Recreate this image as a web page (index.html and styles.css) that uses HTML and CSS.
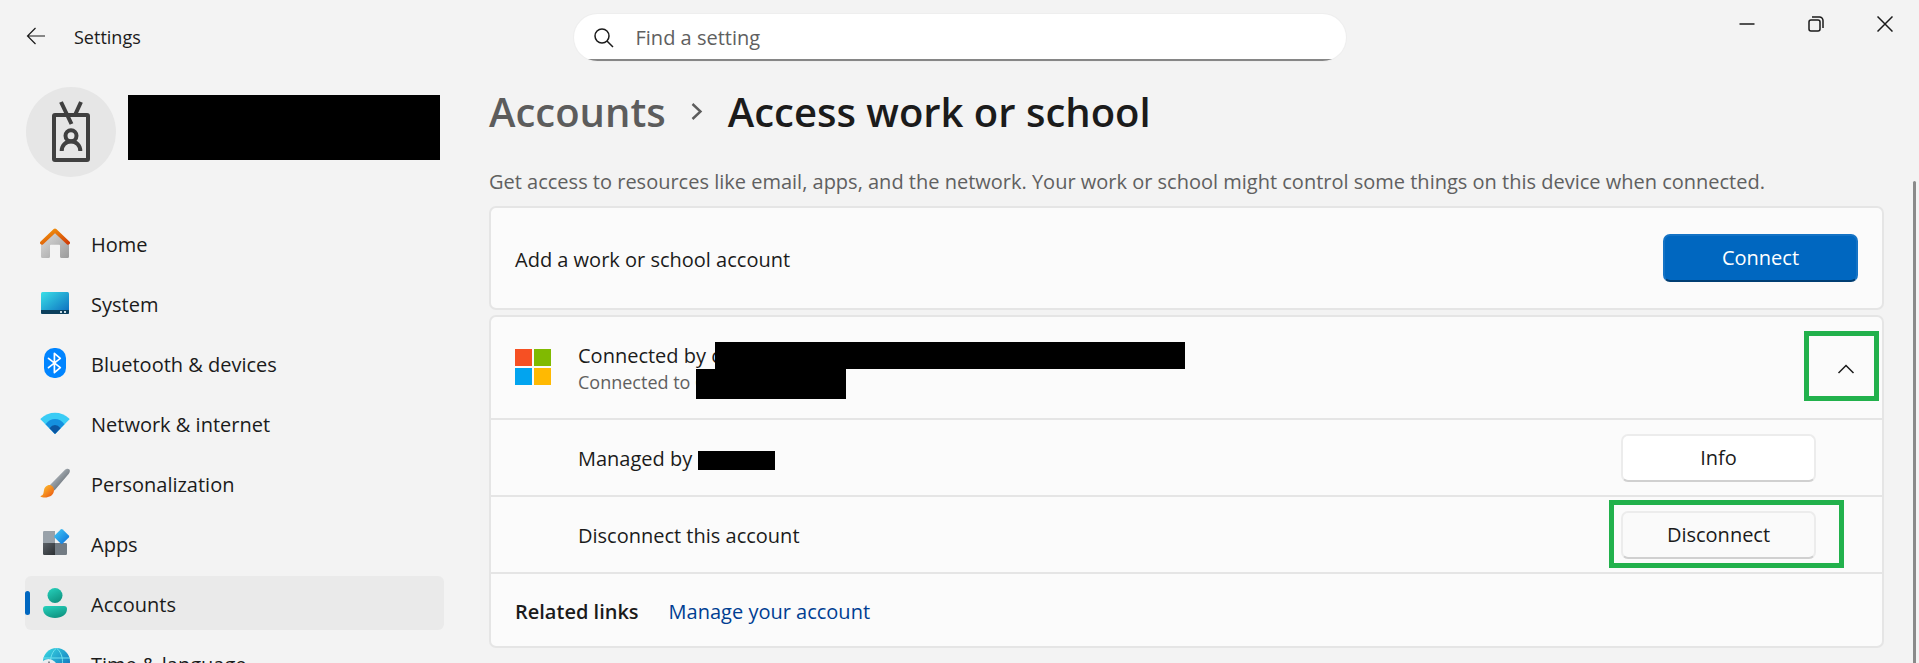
FILE: index.html
```html
<!DOCTYPE html>
<html lang="en">
<head>
    <meta charset="UTF-8">
    <meta name="viewport" content="width=device-width, initial-scale=1.0">
    <title>Settings - Access work or school</title>
    <link rel="stylesheet" href="styles.css">
</head>
<body>
    <header class="titlebar">
        <div class="titlebar-left">
            <button class="back-btn" type="button" aria-label="Back">
                <svg width="20" height="18" viewBox="0 0 20 18" fill="none" stroke="#1b1b1b" stroke-width="1.2"><path d="M19 9H1.5M9.5 1 1.5 9l8 8"/></svg>
            </button>
            <span class="app-name">Settings</span>
        </div>
        <div class="search">
            <svg width="20" height="20" viewBox="0 0 20 20" fill="none" stroke="#1b1b1b" stroke-width="1.5"><circle cx="8" cy="8" r="7"/><path d="M13 13l6 6"/></svg>
            <input type="text" placeholder="Find a setting" aria-label="Find a setting">
        </div>
        <div class="window-controls">
            <button type="button" aria-label="Minimize">
                <svg width="16" height="16" viewBox="0 0 16 16" fill="none" stroke="#1b1b1b" stroke-width="1.5"><path d="M.5 8h15"/></svg>
            </button>
            <button type="button" aria-label="Restore">
                <svg width="16" height="16" viewBox="0 0 16 16" fill="none" stroke="#1b1b1b" stroke-width="1.5"><rect x="1" y="4" width="11" height="11" rx="2"/><path d="M4 1h7.5A3.5 3.5 0 0 1 15 4.500V12"/></svg>
            </button>
            <button type="button" aria-label="Close">
                <svg width="16" height="16" viewBox="0 0 16 16" fill="none" stroke="#1b1b1b" stroke-width="1.5"><path d="M.5.5l15 15M15.500.5l-15 15"/></svg>
            </button>
        </div>
    </header>

    <div class="layout">
        <aside class="sidebar">
            <div class="profile">
                <div class="avatar">
                    <svg width="90" height="90" viewBox="0 0 90 90" fill="none" stroke="#404040" stroke-width="4">
                        <rect x="28" y="28" width="34" height="45" rx="1"/>
                        <path d="M35 15l10.500 22M55 15l-6 13"/>
                        <circle cx="45" cy="48.700" r="5.500"/>
                        <path d="M35.700 64c0-5.500 4-9.500 9.300-9.500s9.300 4 9.300 9.500"/>
                    </svg>
                </div>
                <div class="profile-name"></div>
            </div>

            <nav class="nav">
                <a href="#">
                    <svg width="30" height="30" viewBox="0 0 30 30">
                        <defs>
                            <linearGradient id="wall" x1="0" y1="0" x2="1" y2="1"><stop offset="0" stop-color="#e0e0e0"/><stop offset="1" stop-color="#9b9b9b"/></linearGradient>
                            <linearGradient id="roof" x1="0" y1="0" x2="1" y2="1"><stop offset="0" stop-color="#f59a0c"/><stop offset="1" stop-color="#d13f08"/></linearGradient>
                        </defs>
                        <path fill="url(#wall)" d="M1 14 15 2l14 12v14.500a1.500 1.500 0 0 1-1.500 1.500H21.500a1.500 1.500 0 0 1-1.500-1.500V17.500a.8.8 0 0 0-.8-.8h-8.400a.8.8 0 0 0-.8.8v11A1.500 1.500 0 0 1 8.500 30h-6A1.500 1.500 0 0 1 1 28.500z"/>
                        <path fill="none" stroke="url(#roof)" stroke-width="3.800" stroke-linecap="round" stroke-linejoin="round" d="M1.900 14.800 15 2.500 28.100 14.800"/>
                    </svg>
                    <span class="label">Home</span>
                </a>
                <a href="#">
                    <svg width="30" height="30" viewBox="0 0 30 30">
                        <defs><linearGradient id="screen" x1="0" y1="0" x2="1" y2="1"><stop offset="0" stop-color="#39e0e8"/><stop offset="1" stop-color="#0b68bd"/></linearGradient></defs>
                        <rect x="1" y="4" width="28" height="22" rx="1.500" fill="url(#screen)"/>
                        <path d="M1 22h28v2.500a1.500 1.500 0 0 1-1.500 1.500h-25A1.500 1.500 0 0 1 1 24.500z" fill="#0b3f5c"/>
                        <path d="M20 23h2v2h-2zM24 23h2v2h-2z" fill="#c9dbe4"/>
                    </svg>
                    <span class="label">System</span>
                </a>
                <a href="#">
                    <svg width="30" height="30" viewBox="0 0 30 30">
                        <rect x="4" y="0" width="22" height="30" rx="10" fill="#0084ff"/>
                        <path d="M8.500 10.300 20.300 19.700 14.400 24.700V5.300l5.900 5L8.500 19.700" fill="none" stroke="#fff" stroke-width="1.700" stroke-linecap="round" stroke-linejoin="round"/>
                    </svg>
                    <span class="label">Bluetooth &amp; devices</span>
                </a>
                <a href="#">
                    <svg width="30" height="30" viewBox="0 0 30 30">
                        <path d="M.7 11.500Q.3 11 .8 10.500 7 4.800 15 4.800t14.200 5.700q.5.5.1 1L15.500 25.500q-.5.500-1 0z" fill="#3accf5"/>
                        <path d="M5.500 16.200Q9.500 11 15 11t9.500 5.200L15.500 25.500q-.5.500-1 0z" fill="#1590df"/>
                        <path d="M9.500 20.300Q12 17 15 17t5.500 3.300l-5 5.200q-.5.500-1 0z" fill="#0b56a2"/>
                    </svg>
                    <span class="label">Network &amp; internet</span>
                </a>
                <a href="#">
                    <svg width="30" height="30" viewBox="0 0 30 30">
                        <defs>
                            <linearGradient id="handle" x1="0" y1="0" x2="1" y2="1"><stop offset=".2" stop-color="#b9c0c6"/><stop offset=".8" stop-color="#5f676e"/></linearGradient>
                            <linearGradient id="bristle" x1="0" y1="0" x2="1" y2="1"><stop offset=".1" stop-color="#ffc02e"/><stop offset="1" stop-color="#e8500f"/></linearGradient>
                        </defs>
                        <path d="M9.500 17.500 24.500 2.200c1.500-1.500 3.500-2 4.700-.9s.7 3-.6 4.700L14.500 22.500z" fill="url(#handle)"/>
                        <path d="M8 17.300c3-1 6.300 1.700 6 5.200-.4 5-5 7-9 7-2 0-3.700-.3-4.300-.8-.4-.4 0-.8.500-1C3.500 27 3.500 25 4 22c.4-2.500 2-4.100 4-4.700z" fill="url(#bristle)"/>
                    </svg>
                    <span class="label">Personalization</span>
                </a>
                <a href="#">
                    <svg width="30" height="30" viewBox="0 0 30 30">
                        <defs>
                            <linearGradient id="tile" x1="0" y1="0" x2="1" y2="1"><stop offset="0" stop-color="#5a6066"/><stop offset="1" stop-color="#2c3033"/></linearGradient>
                            <linearGradient id="gem" x1="0" y1="0" x2="1" y2="1"><stop offset="0" stop-color="#45cdf8"/><stop offset="1" stop-color="#0a6ed8"/></linearGradient>
                        </defs>
                        <path d="M3 4.200A1.200 1.200 0 0 1 4.200 3H15v12H3z" fill="#98a1a9"/>
                        <path d="M3 15h12v12H4.200A1.200 1.200 0 0 1 3 25.800z" fill="url(#tile)"/>
                        <path d="M15 15h10.800a1.200 1.200 0 0 1 1.200 1.200v9.600a1.200 1.200 0 0 1-1.200 1.200H15z" fill="#727b83"/>
                        <path d="M20.700 1.400q1-.9 2 0l6.100 6.100q.9 1 0 2l-6.100 6.100q-1 .9-2 0l-6.100-6.100q-.9-1 0-2z" fill="url(#gem)"/>
                    </svg>
                    <span class="label">Apps</span>
                </a>
                <a href="#" class="active" aria-current="page">
                    <svg width="30" height="30" viewBox="0 0 30 30">
                        <defs><linearGradient id="person" x1="0" y1="0" x2=".5" y2="1"><stop offset="0" stop-color="#27d3be"/><stop offset="1" stop-color="#109683"/></linearGradient></defs>
                        <circle cx="15" cy="7.500" r="7.500" fill="url(#person)"/>
                        <path d="M6 18h18a3 3 0 0 1 3 3c0 5.500-5 9-12 9S3 26.500 3 21a3 3 0 0 1 3-3z" fill="url(#person)"/>
                    </svg>
                    <span class="label">Accounts</span>
                </a>
                <a href="#">
                    <svg width="30" height="30" viewBox="0 0 30 30">
                        <defs><linearGradient id="globe" x1="0" y1="0" x2="1" y2="1"><stop offset="0" stop-color="#3bdde2"/><stop offset="1" stop-color="#0a62b8"/></linearGradient></defs>
                        <circle cx="16.500" cy="13.500" r="13.500" fill="url(#globe)"/>
                        <path d="M3 10h27M3 18h27M16.500 0c-8 7-8 20 0 27M16.500 0c8 7 8 20 0 27" fill="none" stroke="#6fe0ee" stroke-width="1"/>
                        <circle cx="8.500" cy="20" r="9" fill="#e9edf0"/>
                        <path d="M9 13.500V20h4" fill="none" stroke="#50575d" stroke-width="1.300"/>
                    </svg>
                    <span class="label">Time &amp; language</span>
                </a>
            </nav>
        </aside>

        <main class="content">
            <h1 class="breadcrumb">
                <a href="#">Accounts</a>
                <svg width="12" height="18" viewBox="0 0 12 18" fill="none" stroke="#5c5c5c" stroke-width="2.400"><path d="M1.500 1 9.500 8.500 1.500 16"/></svg>
                <span>Access work or school</span>
            </h1>
            <p class="description">Get access to resources like email, apps, and the network. Your work or school might control some things on this device when connected.</p>

            <section class="card add-account">
                <span class="label">Add a work or school account</span>
                <button type="button" class="btn btn-primary">Connect</button>
            </section>

            <section class="card">
                <div class="row account-row">
                    <svg width="36" height="36" viewBox="0 0 36 36" aria-hidden="true">
                        <path fill="#f65023" d="M0 0h17v17H0z"/>
                        <path fill="#80ba01" d="M19 0h17v17H19z"/>
                        <path fill="#02a4ef" d="M0 19h17v17H0z"/>
                        <path fill="#ffb902" d="M19 19h17v17H19z"/>
                    </svg>
                    <div class="account-text">
                        <div class="account-title">Connected by c<span class="redacted redacted-title"></span></div>
                        <div class="account-sub">Connected to C<span class="redacted redacted-sub"></span></div>
                    </div>
                    <button type="button" class="expander highlight" aria-label="Collapse" aria-expanded="true">
                        <svg width="18" height="10" viewBox="0 0 18 10" fill="none" stroke="#1b1b1b" stroke-width="1.500"><path d="M1.500 9 9 1.500 16.500 9"/></svg>
                    </button>
                </div>
                <div class="row sub-row">
                    <span class="label">Managed by C<span class="redacted redacted-org"></span></span>
                    <button type="button" class="btn">Info</button>
                </div>
                <div class="row sub-row">
                    <span class="label">Disconnect this account</span>
                    <div class="highlight disconnect-box">
                        <button type="button" class="btn btn-hover">Disconnect</button>
                    </div>
                </div>
                <div class="row links-row">
                    <strong class="label">Related links</strong>
                    <a href="#" class="label">Manage your account</a>
                </div>
            </section>
        </main>
        <div class="scrollbar"></div>
    </div>
</body>
</html>
```
FILE: styles.css
```css
* {
    box-sizing: border-box;
}
body {
    margin: 0;
    height: 100vh;
    display: flex;
    flex-direction: column;
    overflow: hidden;
    background: #f3f3f3;
    color: #1b1b1b;
    font-family: "Open Sans", "Noto Sans", sans-serif;
    font-size: 20px;
    line-height: 28px;
}
button {
    font: inherit;
    color: inherit;
    cursor: pointer;
}
a {
    color: inherit;
    text-decoration: none;
}
svg {
    flex: none;
    display: block;
}
.label {
    padding-top: 3px;
}

/* title bar */
.titlebar {
    flex: none;
    height: 75px;
    display: grid;
    grid-template-columns: 1fr minmax(0, 772px) 1fr;
}
.titlebar-left {
    display: flex;
    align-items: center;
    gap: 28px;
    height: 72px;
    padding-left: 26px;
}
.back-btn,
.window-controls button {
    border: none;
    padding: 0;
    background: none;
}
.app-name {
    padding-top: 2px;
    font-size: 18px;
}
.search {
    display: flex;
    align-items: center;
    gap: 22px;
    height: 47px;
    margin-top: 14px;
    padding: 0 20px;
    border-radius: 24px;
    background: linear-gradient(#868686, #868686) bottom / 100% 2px no-repeat, #fff;
    box-shadow: 0 0 0 1px #eeeeee;
}
.search input {
    flex: 1;
    min-width: 0;
    border: none;
    outline: none;
    padding: 0;
    background: none;
    font: inherit;
}
.search input::placeholder {
    color: #606060;
    opacity: 1;
}
.window-controls {
    display: flex;
    justify-content: flex-end;
}
.window-controls button {
    display: flex;
    align-items: center;
    justify-content: center;
    width: 69px;
    height: 47px;
}

/* sidebar */
.layout {
    flex: 1;
    min-height: 0;
    display: flex;
}
.sidebar {
    flex: none;
    width: 444px;
    padding: 12px 0 0 25px;
}
.profile {
    display: flex;
    align-items: center;
    gap: 12px;
    margin-bottom: 39px;
    padding: 0 4px 0 1px;
}
.avatar {
    flex: none;
    width: 90px;
    height: 90px;
    border-radius: 50%;
    background: #e6e6e6;
}
.profile-name {
    flex: 1;
    height: 65px;
    margin-bottom: 10px;
    background: #000;
}
.nav {
    display: flex;
    flex-direction: column;
    gap: 6px;
}
.nav a {
    position: relative;
    display: flex;
    align-items: center;
    gap: 21px;
    height: 54px;
    padding: 0 15px;
    border-radius: 6px;
}
.nav a.active {
    background: #eaeaea;
}
.nav a.active::before {
    content: "";
    position: absolute;
    left: 0;
    top: 15px;
    width: 5px;
    height: 24px;
    border-radius: 3px;
    background: #0067c0;
}

/* main content */
.content {
    flex: 1;
    min-width: 0;
    padding: 9px 29px 0 45px;
}
.breadcrumb {
    display: flex;
    align-items: center;
    gap: 25px;
    margin: 0 0 28px;
    font-size: 40px;
    line-height: 56px;
    font-weight: 600;
}
.breadcrumb a {
    color: #5c5c5c;
}
.description {
    margin: 0 0 10px;
    color: #606060;
}
.card {
    border: 2px solid #e5e5e5;
    border-radius: 7px;
    margin-bottom: 5px;
    background: #fbfbfb;
}
.add-account {
    display: flex;
    align-items: center;
    justify-content: space-between;
    height: 104px;
    padding: 0 24px;
}
.row {
    display: flex;
    align-items: center;
}
.row + .row {
    border-top: 2px solid #e5e5e5;
}
.account-row {
    height: 101px;
    gap: 27px;
    padding: 0 3px 1px 24px;
}
.account-text {
    flex: 1;
}
.account-title {
    padding-top: 2px;
}
.account-sub {
    color: #606060;
    font-size: 18px;
    line-height: 24px;
}
.sub-row {
    justify-content: space-between;
    height: 77px;
    padding: 0 66px 0 87px;
}
.links-row {
    height: 74px;
    gap: 30px;
    padding: 0 24px;
}
.links-row strong {
    font-weight: 600;
}
.links-row a {
    color: #003e92;
}

/* blacked-out names */
.redacted {
    position: relative;
    display: inline-block;
    vertical-align: middle;
    background: #000;
}
.redacted-title {
    width: 470px;
    height: 27px;
    margin: -4px 0 0 -6px;
}
.redacted-sub {
    width: 150px;
    height: 30px;
    margin: -8px 0 -8px -10px;
}
.redacted-org {
    width: 77px;
    height: 19px;
    margin-left: -12px;
}

/* buttons */
.btn {
    width: 195px;
    height: 48px;
    border: 2px solid #ececec;
    border-bottom-color: #d0d0d0;
    border-radius: 7px;
    padding: 0;
    background: #fff;
}
.btn-primary {
    border-color: #1473c5;
    border-bottom-color: #003e73;
    background: #0067c0;
    color: #fff;
}
.btn-hover {
    background: #fafafa;
}
.highlight {
    border: 5px solid #22b14c;
}
.expander {
    display: flex;
    align-items: center;
    justify-content: flex-end;
    width: 75px;
    height: 70px;
    margin-bottom: 2px;
    padding: 5px 19px 0 0;
    background: none;
}
.disconnect-box {
    height: 68px;
    margin: 0 -28px 1px 0;
    padding: 6px 23px 4px 7px;
}
.disconnect-box .btn {
    display: block;
}

.scrollbar {
    flex: none;
    width: 3px;
    margin: 106px 3px 0 0;
    border-radius: 3px 3px 0 0;
    background: #8a8a8a;
}
```
